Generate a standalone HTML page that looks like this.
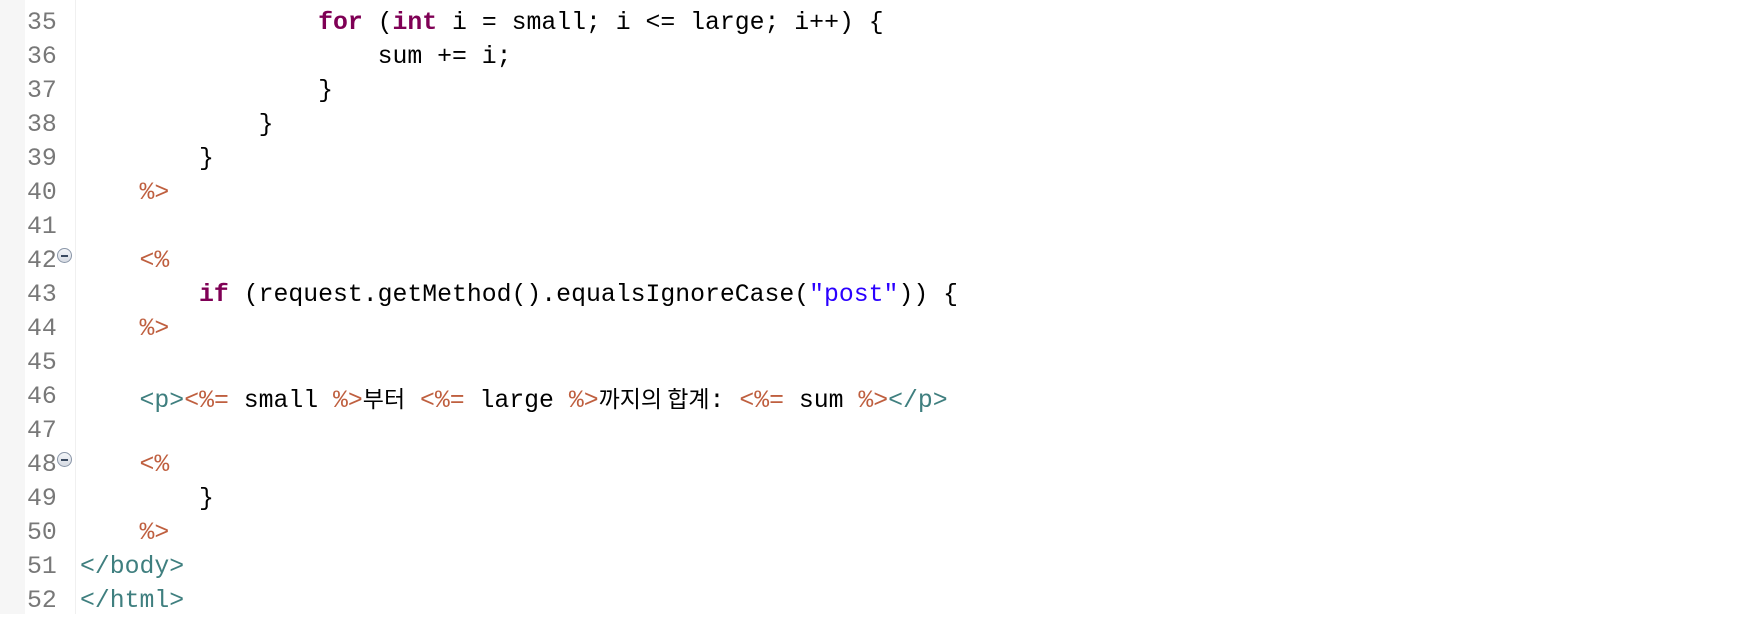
<!DOCTYPE html>
<html><head><meta charset="utf-8"><style>
body{margin:0;width:1738px;height:614px;background:#fff;overflow:hidden;position:relative;font-family:"Liberation Mono","Noto Sans CJK KR",monospace;font-size:24.8px}
.stripe{position:absolute;left:0;top:0;width:25px;height:614px;background:#f6f6f6}
.sep{position:absolute;left:75px;top:0;width:1px;height:614px;background:#f0f0f0}
.nums{position:absolute;left:27px;top:6px;color:#787878}
.code{position:absolute;left:80px;top:6px;color:#000}
.l{height:34px;line-height:34px;white-space:pre}
.t{color:#3f7f7f}.j{color:#bf5f3f}.k{color:#7f0055;font-weight:bold}.s{color:#2a00ff}
.ko{font-family:"Noto Sans CJK KR",sans-serif;font-size:23px}
.fold{position:absolute;left:57px;width:15px;height:15px;border-radius:50%;border:1px solid #8a96a8;background:linear-gradient(#f4f6f9,#d6dbe3);box-sizing:border-box}
.fold:after{content:"";position:absolute;left:3px;top:5.5px;width:7px;height:2px;background:#3a4a60}
</style></head><body>
<div class="stripe"></div><div class="sep"></div>
<div class="nums">
<div class="l">35</div><div class="l">36</div><div class="l">37</div><div class="l">38</div><div class="l">39</div><div class="l">40</div><div class="l">41</div><div class="l">42</div><div class="l">43</div><div class="l">44</div><div class="l">45</div><div class="l">46</div><div class="l">47</div><div class="l">48</div><div class="l">49</div><div class="l">50</div><div class="l">51</div><div class="l">52</div>
</div>
<div class="fold" style="top:248px"></div>
<div class="fold" style="top:452px"></div>
<div class="code"><div class="l">                <span class="k">for</span> (<span class="k">int</span> i = small; i &lt;= large; i++) {</div><div class="l">                    sum += i;</div><div class="l">                }</div><div class="l">            }</div><div class="l">        }</div><div class="l">    <span class="j">%&gt;</span></div><div class="l"> </div><div class="l">    <span class="j">&lt;%</span></div><div class="l">        <span class="k">if</span> (request.getMethod().equalsIgnoreCase(<span class="s">"post"</span>)) {</div><div class="l">    <span class="j">%&gt;</span></div><div class="l"> </div><div class="l">    <span class="t">&lt;p&gt;</span><span class="j">&lt;%=</span> small <span class="j">%&gt;</span><span class="ko">부터</span> <span class="j">&lt;%=</span> large <span class="j">%&gt;</span><span class="ko">까지의 합계</span>: <span class="j">&lt;%=</span> sum <span class="j">%&gt;</span><span class="t">&lt;/p&gt;</span></div><div class="l"> </div><div class="l">    <span class="j">&lt;%</span></div><div class="l">        }</div><div class="l">    <span class="j">%&gt;</span></div><div class="l"><span class="t">&lt;/body&gt;</span></div><div class="l"><span class="t">&lt;/html&gt;</span></div></div>
</body></html>
